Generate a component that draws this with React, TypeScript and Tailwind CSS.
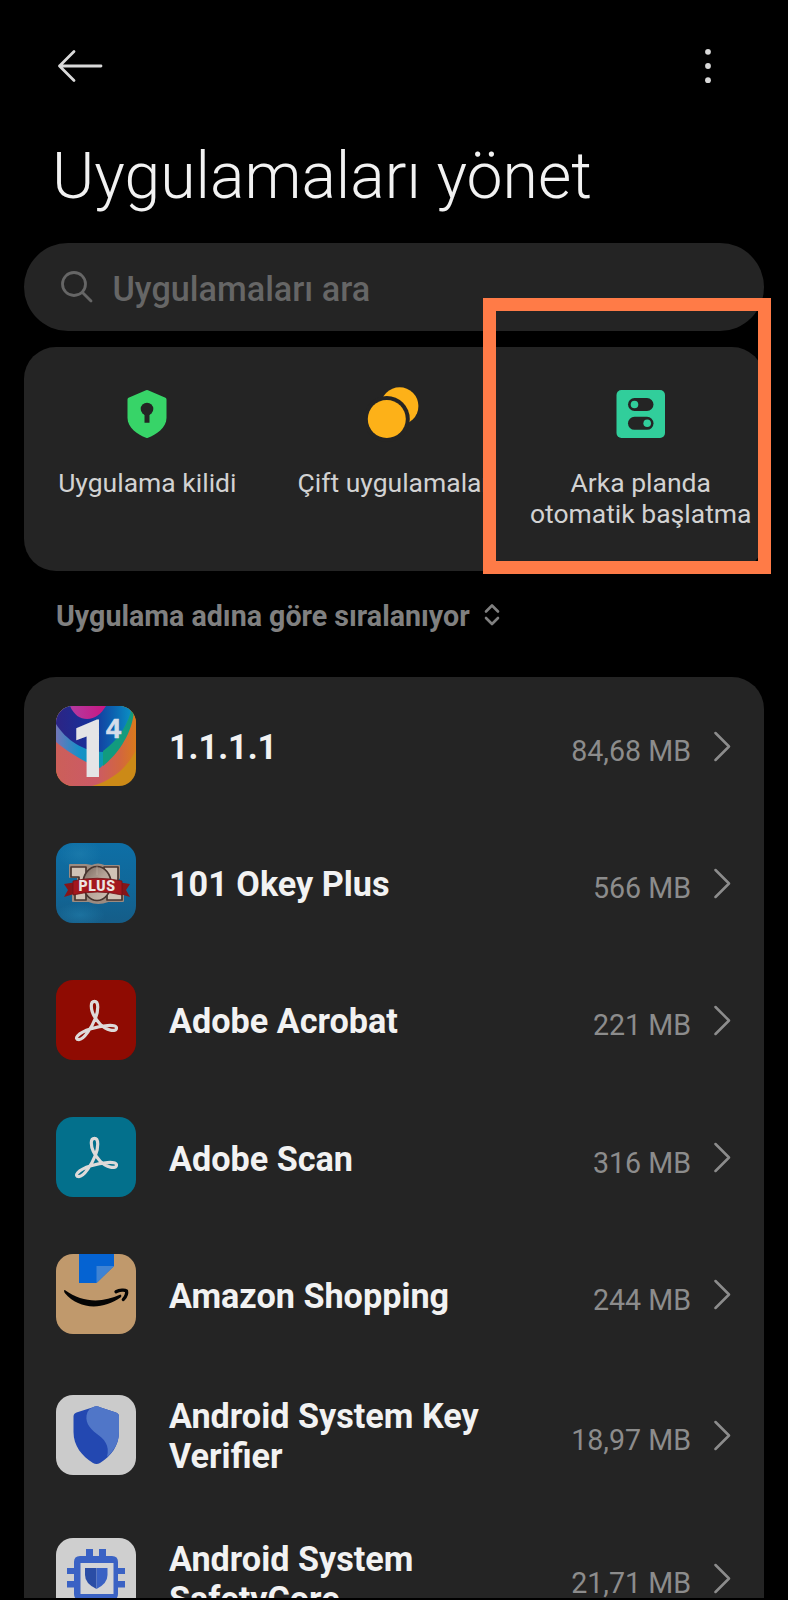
import type { ReactNode } from 'react';

type AppRow = { name: string; size: string; icon: ReactNode; tall?: boolean };

function Tile({ id, children }: { id: string; children: ReactNode }) {
  return (
    <svg viewBox="0 0 80 80" className="h-20 w-20 shrink-0">
      <defs>
        <clipPath id={id}>
          <rect width="80" height="80" rx="17" />
        </clipPath>
      </defs>
      <g clipPath={`url(#${id})`}>{children}</g>
    </svg>
  );
}

function OnesIcon() {
  return (
    <Tile id="ones">
      <defs>
        <linearGradient id="onesBlue" x1="0" y1="0" x2="1" y2="0">
          <stop offset="0" stopColor="#2c2484" />
          <stop offset="0.45" stopColor="#17309a" />
          <stop offset="0.75" stopColor="#0c62b0" />
          <stop offset="1" stopColor="#0a90c4" />
        </linearGradient>
        <linearGradient id="onesCyan" x1="0" y1="0" x2="1" y2="0">
          <stop offset="0" stopColor="#7276b8" />
          <stop offset="0.3" stopColor="#1590c8" />
          <stop offset="0.6" stopColor="#0c97b4" />
          <stop offset="1" stopColor="#159b7c" />
        </linearGradient>
        <linearGradient id="onesCoral" x1="0" y1="0" x2="1" y2="0">
          <stop offset="0" stopColor="#cc5f59" />
          <stop offset="0.5" stopColor="#cb5a66" />
          <stop offset="0.8" stopColor="#d2663f" />
          <stop offset="1" stopColor="#d97a1c" />
        </linearGradient>
        <linearGradient id="onesPink" x1="0" y1="0" x2="1" y2="0">
          <stop offset="0" stopColor="#b53ba0" />
          <stop offset="1" stopColor="#c81782" />
        </linearGradient>
      </defs>
      <rect width="80" height="80" fill="#cc8a17" />
      <path d="M0 0H80V44C72 60 58 74 36 80H0Z" fill="url(#onesCoral)" />
      <path d="M0 0H78C76 22 64 44 44 62C28 56 12 46 0 36Z" fill="url(#onesCyan)" />
      <path d="M0 0H76C73 18 62 34 47 46C28 46 10 34 0 18Z" fill="url(#onesBlue)" />
      <path d="M76 5C70 22 62 34 47 45V60C62 48 76 28 78 5Z" fill="#129b7e" />
      <path d="M14 0C18 9 24 13 31 13C39 13 45 8 50 0Z" fill="url(#onesPink)" />
      <text x="16" y="70" fontSize="77" fontWeight="900" textLength="37" lengthAdjust="spacingAndGlyphs" fill="#e4e4e6" stroke="#e4e4e6" strokeWidth="2.200" fontFamily="Roboto, sans-serif">
        1
      </text>
      <text x="50" y="31.500" fontSize="27" fontWeight="700" fill="#d4dcea" stroke="#d4dcea" strokeWidth="0.700" fontFamily="Liberation Sans, sans-serif">
        4
      </text>
    </Tile>
  );
}

function OkeyIcon() {
  return (
    <Tile id="okey">
      <defs>
        <linearGradient id="okeySky" x1="0" y1="0" x2="0" y2="1">
          <stop offset="0" stopColor="#0e6fa6" />
          <stop offset="0.5" stopColor="#10689a" />
          <stop offset="1" stopColor="#155d88" />
        </linearGradient>
        <radialGradient id="okeyGlow">
          <stop offset="0" stopColor="#2484b2" stopOpacity="0.5" />
          <stop offset="1" stopColor="#2484b2" stopOpacity="0" />
        </radialGradient>
        <linearGradient id="okeyZero" x1="0" y1="0" x2="1" y2="1">
          <stop offset="0" stopColor="#77655b" />
          <stop offset="0.5" stopColor="#b5a498" />
          <stop offset="1" stopColor="#d1c3b6" />
        </linearGradient>
      </defs>
      <rect width="80" height="80" fill="url(#okeySky)" />
      <ellipse cx="24" cy="11" rx="22" ry="15" fill="url(#okeyGlow)" />
      <ellipse cx="24" cy="72" rx="25" ry="12" fill="url(#okeyGlow)" />
      <path
        d="M14 22H30L36 23Q42 20 48 23H63V35H62V48H67V58H52Q42 62 33 58H17V48H22V34H14Z"
        fill="#9c8b80"
        stroke="#9c8b80"
        strokeWidth="2"
        strokeLinejoin="round"
      />
      <g fill="#d1c3b6" stroke="#47352f" strokeWidth="1.700" strokeLinejoin="round">
        <path d="M15 24H30V57H19V50H23V34H15Z" />
        <path d="M48 24H62V50H66V57H51V34H48Z" />
        <ellipse cx="41" cy="40.500" rx="14" ry="17" fill="url(#okeyZero)" />
      </g>
      <path d="M41 23V32" stroke="#d1c3b6" strokeWidth="1" opacity="0.4" />
      <path d="M8 41L21 39V50L8 54L12 47ZM74 41L61 39V50L74 54L70 47Z" fill="#861519" />
      <path d="M17 38Q41 32.500 66 38V52Q41 46 17 52Z" fill="#a3171d" stroke="#701216" strokeWidth="0.800" />
      <text x="41" y="47.500" textAnchor="middle" fontSize="14" fontWeight="900" letterSpacing="0.600" fill="#ece5e2" fontFamily="Roboto, sans-serif">
        PLUS
      </text>
    </Tile>
  );
}

function TrefoilIcon({ id, color }: { id: string; color: string }) {
  return (
    <Tile id={id}>
      <rect width="80" height="80" fill={color} />
      <path
        d="M38.500 21.300C43 21.300 42.300 31 39.500 38C36 47 28 59.600 23 59.600C17.500 59.600 21 53 35 48.800C45 45.800 60.500 43.500 60.500 48C60.500 52.500 50 50.500 44 44C38 37.500 35.300 31 35.300 26C35.300 22.800 36.500 21.300 38.500 21.300Z"
        fill="none"
        stroke="#dedad9"
        strokeWidth="3.200"
        strokeLinejoin="round"
      />
    </Tile>
  );
}

function AmazonIcon() {
  return (
    <Tile id="amazon">
      <rect width="80" height="80" fill="#c0996c" />
      <path d="M23 0H58V12L40.500 29H23Z" fill="#0563d2" />
      <path d="M40.500 12H58L40.500 29Z" fill="#3f83d3" />
      <path d="M8.800 36C27 49 46 49 64.500 40.500C65.800 41.300 65.500 42.800 64.500 43.500C47 56 23 56 8.800 39C7.800 37 8 35.500 8.800 36Z" fill="#050505" />
      <path d="M60 37.700C63.500 35.800 69 35.800 70.500 36.800C71.200 39.500 69.500 43 67.300 45.500" fill="none" stroke="#050505" strokeWidth="3.300" strokeLinejoin="round" strokeLinecap="round" />
    </Tile>
  );
}

function VerifierIcon() {
  return (
    <Tile id="verifier">
      <rect width="80" height="80" fill="#cbcbcb" />
      <path d="M37 12.300Q40.500 10.300 44 12.300L60 17.500Q63 18.500 63 21.500V37C63 51 55 61 44 68Q40.500 70 37 68C26 61 17.500 51 17.500 37V21.500Q17.500 18.500 20.500 17.500Z" fill="#2348b1" />
      <path d="M37 12.300Q40.500 10.300 44 12.300L60 17.500Q63 18.500 63 21.500V37C63 47 58.500 55.500 51 62C54 50 48 44 41 39C33 33 28 26 31.500 17Q33 13.500 37 12.300Z" fill="#5076c8" />
    </Tile>
  );
}

function SafetyIcon() {
  return (
    <Tile id="safety">
      <rect width="80" height="80" fill="#cfcfcf" />
      <path d="M30 11H37V18H43V11H50V18H56Q62 18 62 24V30H69V36H62V43H69V49.500H62V56Q62 62 56 62H24Q18 62 18 56V49.500H11V43H18V36H11V30H18V24Q18 18 24 18H30Z" fill="#3a62c4" />
      <rect x="24.500" y="25" width="33" height="31" fill="#d3d4d6" />
      <path d="M29 30H40.500V51Q29 45.500 29 37Z" fill="#2a4da5" />
      <path d="M40.500 30H51.500V37Q51.500 45.500 40.500 51Z" fill="#3a62c4" />
    </Tile>
  );
}

function ShieldLock() {
  return (
    <svg viewBox="0 0 56 56" className="h-14 w-14">
      <path d="M28 4Q28.600 4 29 4.200L46.500 11.800Q47.500 12.300 47.500 13.500V32C47.500 42 37 48.500 29 51.800Q28 52.200 27 51.800C19 48.500 8.500 42 8.500 32V13.500Q8.500 12.300 9.500 11.800L27 4.200Q27.400 4 28 4Z" fill="#37d468" />
      <circle cx="28" cy="23" r="6.300" fill="#242424" />
      <path d="M25.500 26H30.500V36.700H25.500Z" fill="#242424" />
    </svg>
  );
}

function DualCircles() {
  return (
    <svg viewBox="0 0 56 56" className="h-14 w-14">
      <circle cx="33.600" cy="20" r="18.800" fill="#fdb118" />
      <circle cx="20.800" cy="33" r="23" fill="#242424" />
      <circle cx="20.800" cy="33" r="19" fill="#fdb118" />
    </svg>
  );
}

function Toggles() {
  return (
    <svg viewBox="0 0 56 56" className="h-14 w-14">
      <rect x="3.500" y="4" width="48.500" height="48" rx="5" fill="#31ce9b" />
      <rect x="15" y="12" width="25.500" height="13" rx="6.500" fill="#242424" />
      <rect x="15" y="30.800" width="25.500" height="13" rx="6.500" fill="#242424" />
      <circle cx="21.500" cy="18.500" r="3.800" fill="#31ce9b" />
      <circle cx="34.200" cy="37.300" r="3.800" fill="#31ce9b" />
    </svg>
  );
}

const apps: AppRow[] = [
  { name: '1.1.1.1', size: '84,68 MB', icon: <OnesIcon /> },
  { name: '101 Okey Plus', size: '566 MB', icon: <OkeyIcon /> },
  { name: 'Adobe Acrobat', size: '221 MB', icon: <TrefoilIcon id="acrobat" color="#8f0b02" /> },
  { name: 'Adobe Scan', size: '316 MB', icon: <TrefoilIcon id="scan" color="#03708c" /> },
  { name: 'Amazon Shopping', size: '244 MB', icon: <AmazonIcon /> },
  { name: 'Android System Key Verifier', size: '18,97 MB', icon: <VerifierIcon />, tall: true },
  { name: 'Android System SafetyCore', size: '21,71 MB', icon: <SafetyIcon />, tall: true },
];

function Shortcut({ icon, children }: { icon: ReactNode; children: ReactNode }) {
  return (
    <div className="flex flex-1 flex-col items-center whitespace-nowrap pt-[39px] text-center text-[26.500px] leading-[31px] text-[#d2d2d2]">
      {icon}
      <div className="mt-[25px]">{children}</div>
    </div>
  );
}

export default function App() {
  return (
    <div className="flex h-[1600px] w-[788px] flex-col overflow-hidden bg-black px-6 font-[Roboto,sans-serif] text-[#f2f2f2]">
      <header className="flex h-[131px] shrink-0 items-center justify-between pl-[33px] pr-[49px]">
        <svg viewBox="0 0 46 34" className="h-[34px] w-[46px]" fill="none" stroke="#d9d9d9" strokeWidth="2.800" strokeLinecap="round" strokeLinejoin="round">
          <path d="M17 2.500L2.500 17L17 31.500M2.500 17H44" />
        </svg>
        <svg viewBox="0 0 14 36" className="h-9 w-[14px]" fill="#d9d9d9">
          <circle cx="7" cy="3.800" r="2.900" />
          <circle cx="7" cy="18" r="2.900" />
          <circle cx="7" cy="32.200" r="2.900" />
        </svg>
      </header>

      <h1 className="h-28 shrink-0 whitespace-nowrap pl-7 pt-[6px] text-[64.300px] font-light leading-[78px]">
        Uygulamaları yönet
      </h1>

      <div className="flex h-[88px] shrink-0 items-center rounded-[44px] bg-[#242424] pl-9">
        <svg viewBox="0 0 34 34" className="h-[34px] w-[34px]" fill="none" stroke="#666666" strokeWidth="2.800" strokeLinecap="round">
          <circle cx="14" cy="14" r="11.500" />
          <path d="M22.500 22.500L31 31" />
        </svg>
        <span className="ml-[18.500px] pt-[3px] text-[34.200px] font-medium leading-10 text-[#666666]">Uygulamaları ara</span>
      </div>

      <section className="relative mt-4 h-[224px] shrink-0">
        <div className="flex h-full overflow-hidden rounded-[32px] bg-[#242424]">
          <Shortcut icon={<ShieldLock />}>Uygulama kilidi</Shortcut>
          <Shortcut icon={<DualCircles />}>Çift uygulamalar</Shortcut>
          <Shortcut icon={<Toggles />}>
            Arka planda
            <br />
            otomatik başlatma
          </Shortcut>
        </div>
        <div className="absolute -right-[7px] -top-[49px] h-[275.500px] w-[288.500px] border-[13px] border-[#ff7b47]" />
      </section>

      <div className="flex h-[106px] shrink-0 items-center pb-4 pl-8">
        <span className="text-[28.600px] font-bold leading-8 text-[#808080]">Uygulama adına göre sıralanıyor</span>
        <svg viewBox="0 0 18 24" className="mb-[2px] ml-[13.500px] h-6 w-[18px]" fill="none" stroke="#808080" strokeWidth="2.600" strokeLinecap="round" strokeLinejoin="round">
          <path d="M3 8.500L9 2.500L15 8.500M3 15L9 21L15 15" />
        </svg>
      </div>

      <main className="h-[921px] shrink-0 overflow-hidden rounded-t-[32px] bg-[#242424]">
        {apps.map((app) => (
          <div key={app.name} className={`flex items-center pl-8 pr-8 ${app.tall ? 'h-[143.200px]' : 'h-[137.200px]'}`}>
            {app.icon}
            <span className="ml-[33px] w-[340px] pt-[3px] text-[34.200px] font-bold leading-10">{app.name}</span>
            <span className="ml-auto pt-[11px] text-[28.600px] leading-8 text-[#8c8c8c]">{app.size}</span>
            <svg viewBox="0 0 18 32" className="ml-[23px] h-8 w-[18px]" fill="none" stroke="#8c8c8c" strokeWidth="2.500" strokeLinecap="round" strokeLinejoin="round">
              <path d="M1.500 3L15 16.500L1.500 30" />
            </svg>
          </div>
        ))}
      </main>
    </div>
  );
}
